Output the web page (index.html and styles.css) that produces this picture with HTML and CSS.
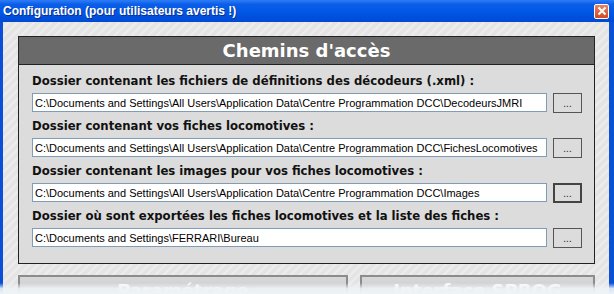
FILE: index.html
```html
<!DOCTYPE html>
<html lang="fr">
<head>
    <meta charset="UTF-8">
    <title>Configuration</title>
    <link rel="stylesheet" href="styles.css">
</head>
<body>
    <div class="window">
        <div class="titlebar">
            <span class="title">Configuration (pour utilisateurs avertis !)</span>
            <span class="close">
                <svg width="10" height="10" viewBox="0 0 10 10"><path d="M1.5 1.5 L8.5 8.5 M8.5 1.5 L1.5 8.5" stroke="#fff" stroke-width="2"/></svg>
            </span>
        </div>
        <div class="client">
            <div class="panel">
                <div class="panel-head">Chemins d'accès</div>
                <div class="panel-body">
                    <div class="field">
                        <label>Dossier contenant les fichiers de définitions des décodeurs (.xml) :</label>
                        <div class="row">
                            <input type="text" value="C:\Documents and Settings\All Users\Application Data\Centre Programmation DCC\DecodeursJMRI">
                            <button>...</button>
                        </div>
                    </div>
                    <div class="field">
                        <label>Dossier contenant vos fiches locomotives :</label>
                        <div class="row">
                            <input type="text" value="C:\Documents and Settings\All Users\Application Data\Centre Programmation DCC\FichesLocomotives">
                            <button>...</button>
                        </div>
                    </div>
                    <div class="field">
                        <label>Dossier contenant les images pour vos fiches locomotives :</label>
                        <div class="row">
                            <input type="text" value="C:\Documents and Settings\All Users\Application Data\Centre Programmation DCC\Images">
                            <button class="default">...</button>
                        </div>
                    </div>
                    <div class="field">
                        <label>Dossier où sont exportées les fiches locomotives et la liste des fiches :</label>
                        <div class="row">
                            <input type="text" value="C:\Documents and Settings\FERRARI\Bureau">
                            <button>...</button>
                        </div>
                    </div>
                </div>
            </div>
            <div class="actions">
                <div class="big-btn left">Paramétrage</div>
                <div class="big-btn right">Interface SPROG</div>
            </div>
        </div>
        <div class="fade"></div>
    </div>
</body>
</html>
```

FILE: styles.css
```css
body {
    margin: 0;
    width: 614px;
    height: 294px;
    overflow: hidden;
    font-family: "DejaVu Sans", Verdana, sans-serif;
}

.window {
    position: relative;
    height: 294px;
    display: flex;
    flex-direction: column;
    background: linear-gradient(to right, #0a4fd6, #2a74f0 40%, #0a4fd6); /* XP blue frame */
    padding: 0 5px 0 3px;
    box-sizing: border-box;
    overflow: hidden;
}

.titlebar {
    flex-shrink: 0;
    height: 22px;
    margin: 0 -5px 0 -3px;
    padding: 0 5px 0 3px;
    display: flex;
    align-items: center;
    justify-content: space-between;
    background: linear-gradient(to bottom, #2f7cf5 0%, #0a5ee8 20%, #0055e5 60%, #0049d2 100%);
}

.title {
    color: #fff;
    font-family: "Liberation Sans", Arial, sans-serif;
    font-weight: bold;
    font-size: 12px;
    text-shadow: 1px 1px 0 #0a2f90;
}

.close {
    width: 13px;
    height: 13px;
    display: flex;
    align-items: center;
    justify-content: center;
    background: linear-gradient(to bottom, #e98366, #d6481f);
    border: 1px solid #fff;
    border-radius: 2px;
}

.client {
    flex-shrink: 0;
    padding: 14px 14px 0 15px;
    background: repeating-linear-gradient(135deg, #e4e4e4 0px, #e4e4e4 3px, #efefef 4px, #e6e6e6 6px);
}

.panel {
    border: 1px solid #222;
    background: #dcdcdc;
}

.panel-head {
    height: 27px;
    line-height: 27px;
    background: #6a6a6a;
    border-bottom: 1px solid #222;
    color: #fff;
    text-align: center;
    font-weight: bold;
    font-size: 18px;
}

.panel-body {
    padding: 9px 12px 15px 13px;
    display: flex;
    flex-direction: column;
    gap: 6px;
}

.field label {
    display: block;
    height: 15px;
    line-height: 15px;
    margin-bottom: 4px;
    font-weight: bold;
    font-size: 11.7px;
    color: #111;
}

.row {
    display: flex;
    gap: 6px;
}

.row input {
    flex: 1;
    height: 19px;
    box-sizing: border-box;
    border: 1px solid #7f9db9;
    padding: 0 2px;
    font-family: "Liberation Sans", Arial, sans-serif;
    font-size: 11px;
    color: #000;
    background: #fff;
}

.row button {
    width: 29px;
    height: 20px;
    border: 1px solid #555;
    background: #dcdcdc;
    font-family: "Liberation Sans", Arial, sans-serif;
    font-size: 10px;
    color: #222;
    padding: 0;
}

.row button.default {
    border: 2px solid #444;
}

.actions {
    display: flex;
    gap: 12px;
    margin-top: 11px;
}

.big-btn {
    height: 30px;
    border: 2px solid #8c8c8c;
    border-bottom: none;
    background: linear-gradient(to bottom, #d8d8d8, #bcc0c4);
    color: #fafafa;
    text-align: center;
    font-weight: bold;
    font-size: 18px;
    line-height: 28px;
}

.big-btn.left {
    width: 326px;
}

.big-btn.right {
    flex: 1;
}

.fade {
    position: absolute;
    left: 0;
    right: 0;
    bottom: 0;
    height: 11px;
    background: linear-gradient(to bottom, rgba(238, 243, 246, 0), rgba(238, 243, 246, 0.9) 50%, #eef3f6);
}
```
